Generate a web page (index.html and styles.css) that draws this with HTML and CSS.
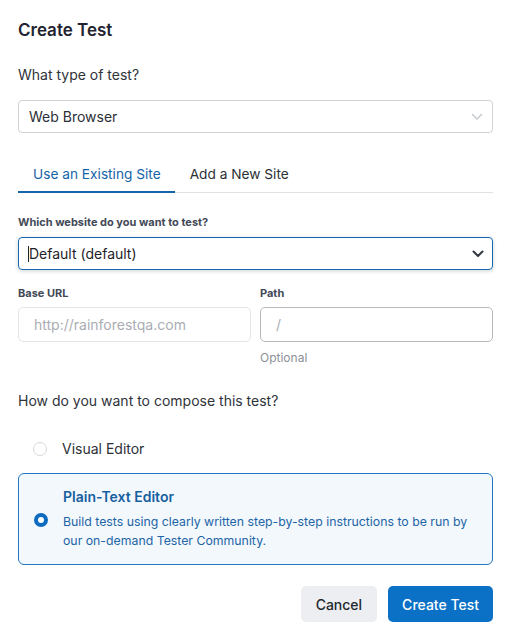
FILE: index.html
```html
<!DOCTYPE html>
<html>
<head>
<meta charset="utf-8">
<link rel="stylesheet" href="styles.css">
</head>
<body>
<div class="modal">
  <h1 class="title">Create Test</h1>
  <p class="question">What type of test?</p>
  <div class="select">
    <span>Web Browser</span>
    <svg class="chev light" width="12" height="8" viewBox="0 0 12 8"><path d="M1.5 1.5 L6 6 L10.5 1.5" fill="none" stroke="#c4c7cc" stroke-width="1.4" stroke-linecap="round" stroke-linejoin="round"/></svg>
  </div>

  <div class="tabs">
    <div class="tab active">Use an Existing Site</div>
    <div class="tab">Add a New Site</div>
  </div>

  <label class="label">Which website do you want to test?</label>
  <div class="select focused">
    <span><span class="caret"></span>Default (default)</span>
    <svg class="chev" width="12" height="8" viewBox="0 0 12 8"><path d="M1.5 1.5 L6 6 L10.5 1.5" fill="none" stroke="#333840" stroke-width="2" stroke-linecap="round" stroke-linejoin="round"/></svg>
  </div>

  <div class="url-row">
    <div class="field">
      <label class="label">Base URL</label>
      <div class="input disabled"><span class="placeholder">http://rainforestqa.com</span></div>
    </div>
    <div class="field">
      <label class="label">Path</label>
      <div class="input path"><span class="placeholder">/</span></div>
      <div class="hint">Optional</div>
    </div>
  </div>

  <p class="question compose">How do you want to compose this test?</p>

  <div class="option">
    <span class="radio"></span>
    <span class="option-title plain">Visual Editor</span>
  </div>

  <div class="option card">
    <span class="radio checked"></span>
    <div class="card-body">
      <div class="option-title">Plain-Text Editor</div>
      <div class="desc">Build tests using clearly written step-by-step instructions to be run by our on-demand Tester Community.</div>
    </div>
  </div>

  <div class="actions">
    <button class="btn cancel">Cancel</button>
    <button class="btn primary">Create Test</button>
  </div>
</div>
</body>
</html>
```

FILE: styles.css
```css
* { box-sizing: border-box; }
html, body { margin: 0; padding: 0; background: #fff; }
body {
  font-family: Inter, "Noto Sans", sans-serif;
  color: #2b2f36;
}
.modal {
  padding: 19px 18px 0 18px;
  width: 511px;
}
.title {
  margin: 0;
  font-size: 17px;
  font-weight: 600;
  line-height: 22px;
  color: #1f2430;
}
.question {
  margin: 24px 0 0 0;
  font-size: 14px;
  line-height: 20px;
  color: #2f333a;
}
.select {
  margin-top: 15px;
  height: 33px;
  border: 1px solid #d0d3d7;
  border-radius: 4px;
  display: flex;
  align-items: center;
  justify-content: space-between;
  padding: 0 9px 0 10px;
  font-size: 14px;
  color: #2b2f36;
}
.select.focused {
  margin-top: 8px;
  border-color: #1569b2;
  box-shadow: 0 1px 4px rgba(0,0,0,0.18);
  padding-left: 9px;
  padding-right: 8px;
  color: #1f2328;
}
.caret {
  display: inline-block;
  width: 1px;
  height: 16px;
  background: #222;
  vertical-align: -3px;
}
.tabs {
  margin-top: 21px;
  display: flex;
  border-bottom: 1px solid #dfe1e4;
  height: 39px;
}
.tab {
  font-size: 13.7px;
  line-height: 20px;
  padding: 10px 14px 0 15px;
  color: #2b2f36;
}
.tab.active {
  color: #1564a8;
  border-bottom: 2px solid #1564a8;
  margin-bottom: -1px;
}
.label {
  display: block;
  font-size: 11px;
  font-weight: 700;
  line-height: 14px;
  color: #434957;
  margin-top: 22px;
}
.url-row {
  display: flex;
  gap: 9px;
  margin-top: 2px;
}
.field { flex: 1; }
.field .label { margin-top: 14px; }
.input {
  margin-top: 7px;
  height: 35px;
  border: 1px solid #e3e5e8;
  border-radius: 5px;
  display: flex;
  align-items: center;
  padding-left: 15px;
  font-size: 14px;
}
.input.path { border-color: #b6b9be; }
.placeholder { color: #a9adb3; }
.hint {
  margin-top: 8px;
  font-size: 12px;
  line-height: 16px;
  color: #8d9197;
}
.compose { margin-top: 25px; }
.option {
  display: flex;
  align-items: center;
  margin-top: 28px;
  padding-left: 15px;
}
.radio {
  width: 14px;
  height: 14px;
  border-radius: 50%;
  border: 1px solid #d6d8dc;
  background: #fff;
  flex: none;
}
.radio.checked {
  border: 4px solid #0d6cc0;
  background: #fff;
}
.option-title {
  font-size: 14px;
  font-weight: 600;
  color: #17609f;
  line-height: 20px;
}
.option-title.plain {
  font-weight: 400;
  color: #2b2f36;
  margin-left: 15px;
}
.card {
  margin-top: 14px;
  border: 1px solid #2277c4;
  border-radius: 6px;
  background: #f3f8fd;
  padding: 13px 18px 14px 15px;
  align-items: center;
}
.card .radio { margin-top: 26px; align-self: flex-start; }
.card-body { margin-left: 15px; }
.desc {
  margin-top: 5px;
  font-size: 12.3px;
  line-height: 19px;
  color: #1d65a6;
}
.actions {
  display: flex;
  justify-content: flex-end;
  gap: 11px;
  margin-top: 21px;
}
.btn {
  font-family: Inter, "Noto Sans", sans-serif;
  font-size: 14px;
  font-weight: 500;
  height: 36px;
  border: none;
  border-radius: 5px;
  padding: 0 15px;
}
.btn.cancel {
  background: #eceef1;
  color: #24282f;
}
.btn.primary {
  background: #0a71c6;
  color: #fff;
  padding: 0 14px;
}
```
